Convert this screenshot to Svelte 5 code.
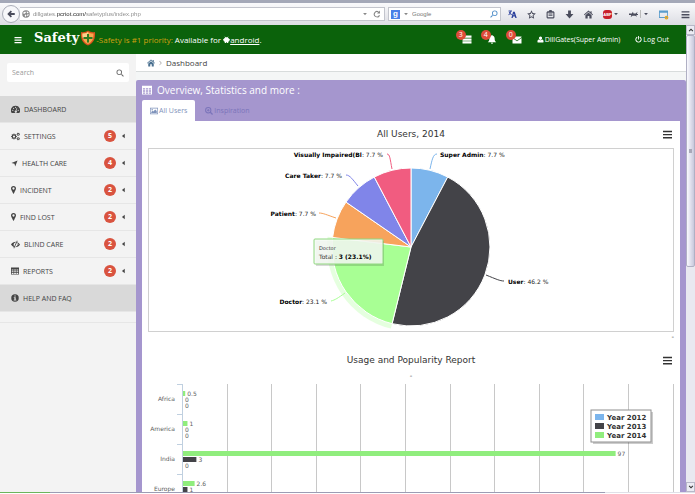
<!--
  SafetyPlus dashboard: browser chrome, top bar, side menu and the
  "All Users" statistics panel with its two charts.
-->
<script lang="ts">
  type Slice = {
    name: string;
    share: number;
    color: string;
    labelX: number;
    labelY: number;
    anchor: 'start' | 'end';
    connector: string;
  };

  const gear = (cx: number, cy: number, r: number, teeth: number, hole: number) => {
    const points: string[] = [];
    const steps = teeth * 4;
    for (let i = 0; i < steps; i++) {
      const radius = i % 4 < 2 ? r : r * 0.74;
      const angle = ((i - 0.5) / steps) * Math.PI * 2;
      points.push(`${(cx + radius * Math.cos(angle)).toFixed(2)} ${(cy + radius * Math.sin(angle)).toFixed(2)}`);
    }
    return `M${points.join('L')}z${dot(cx, cy, hole)}`;
  };

  const dot = (cx: number, cy: number, r: number) =>
    `M${cx - r} ${cy}a${r} ${r} 0 1 0 ${r * 2} 0a${r} ${r} 0 1 0 ${-r * 2} 0z`;

  // Glyphs sit in a 16x16 box and are filled with evenodd.
  const icons: Record<string, string> = {
    bars: 'M1 2h14v2.600H1zM1 7h14v2.600H1zM1 12h14v2.600H1z',
    chartBars: 'M0 1.500h16v2.500H0zM0 7h16v2.500H0zM0 12.500h16V15H0z',
    search: `${dot(6.5, 6.5, 5.5)}${dot(6.5, 6.5, 3.8)}M10.2 11.6l1.4-1.4 4 4-1.4 1.4z`,
    zoomIn: `${dot(6.5, 6.5, 6.3)}${dot(6.5, 6.5, 4.3)}M10.2 12l1.8-1.8 4 4-1.8 1.8zM5.7 4h1.6v1.7H9v1.6H7.3V9H5.7V7.3H4V5.7h1.7z`,
    gauge: `M8 1.5a8 8 0 0 0-6.8 12.7h13.6A8 8 0 0 0 8 1.5z${dot(3.2, 9.5, 1.1)}${dot(4.6, 5.8, 1.1)}${dot(8, 4.2, 1.1)}${dot(12.8, 9.5, 1.1)}M10.2 4.7l1.1.3-1.7 5.2a2 2 0 1 1-1.2-.3z`,
    cogs: `${gear(5.3, 8, 5.3, 8, 2)}${gear(12.9, 4, 3, 6, 1.1)}${gear(12.9, 12, 3, 6, 1.1)}`,
    arrow: 'M15 1L9.5 15 8 8.5 1 7z',
    pin: `M8 0a5 5 0 0 0-5 5c0 2.300 1.800 4 3.500 8.500L8 16l1.500-2.500C11.200 9 13 7.300 13 5a5 5 0 0 0-5-5z${dot(8, 5, 2.3)}`,
    eyeSlash: `M0 8.200C2 5 5 3.200 8.600 3.200L8 4.600A3.700 3.700 0 0 0 5.800 11l-.8 1.500C3 11.600 1.300 10.200 0 8.200zM11.500 3.900C13.400 4.800 14.900 6.300 16 8.200c-1.900 3-4.700 4.800-8.200 4.900l.8-1.400c2-.4 3.300-2.300 3-4.300 1 .2 2 .5 2.500.9-.9-1.300-2-2.300-3.300-3zM10.600 1l1.200.6L5.600 15l-1.200-.6z`,
    table: 'M0 1h16v14H0zM1.500 5v2.200h3.500V5zM6.300 5v2.200h3.500V5zM11 5v2.200h3.500V5zM1.500 8.400v2.200h3.500V8.400zM6.300 8.400v2.200h3.500V8.400zM11 8.400v2.200h3.500V8.400zM1.500 11.800v2h3.500v-2zM6.300 11.800v2h3.500v-2zM11 11.800v2h3.500v-2z',
    info: `${dot(8, 8, 7.5)}M6.700 2.800h2.800v2.400H6.700zM5.500 6.500h4v5h1.300v1.700H5.300v-1.700h1.400V8.200H5.500z`,
    home: 'M8 1L0 8l1 1.200L8 3.200l7 6L16 8l-2.500-2.200V2h-2v2zM8 4.500L2.500 9.200V15h4v-4.300h3V15h4V9.200z',
    image: `M0 1.500h16v13H0zM1.300 2.800v10.400h13.400V2.800z${dot(4.3, 5.700, 1.500)}M2.500 12v-2l2.500-2.500L6.500 9l4-4 3 3v4z`,
    tasks: 'M0 1h16v4H0zM0 6h16v4H0zM0 11h16v4H0z',
    bell: 'M8 0a1.200 1.200 0 0 0-1.200 1.300C4.500 1.800 3.300 3.800 3.300 6c0 3.500-.8 5-2.800 7h15c-2-2-2.800-3.500-2.800-7 0-2.200-1.200-4.200-3.500-4.700A1.200 1.200 0 0 0 8 0zM6 13.600h4a2 2 0 0 1-4 0z',
    envelope: 'M0 2.500h16v1.400L8 9.700 0 3.900zM0 5.500l8 5.800 8-5.800V15H0z',
    user: 'M8 1a3.600 3.600 0 0 0-3.600 3.800C4.400 7 6 9 8 9s3.600-2 3.600-4.200A3.600 3.600 0 0 0 8 1zM4 8.200C2 8.800 1 10.500 1 13c0 1.400.8 2 2 2h10c1.200 0 2-.6 2-2 0-2.500-1-4.200-3-4.800-2.200 2.300-5.800 2.300-8 0z',
    power: 'M7 0h2v8H7zM4.400 1.600l1.200 2.200a4.800 4.800 0 1 0 4.800 0l1.200-2.200A7.200 7.200 0 1 1 4.400 1.600z',
    back: 'M7.500 1L.5 8l7 7 2.500-2.500L7.500 10H15.500V6H7.500L10 3.500z',
    globe: `${dot(8, 8, 7.500)}M3 4.500L6.500 3 8 5 5.500 7.500 2.200 7zM9.500 2.500l3.700 2L12 7 9.500 5.500zM6 9l3 1-1.500 4L5.500 12zM11 8.500l3 .5-2.500 3.500-1.500-2z`,
    reload: 'M14 1v6H8l2.300-2.200A4.300 4.300 0 1 0 12 10l2 .8A6.400 6.400 0 1 1 11.800 3.300z',
    translate: 'M1 1h6v1.600H5.800L4.500 5.700 7 8 6 9.200 3.700 7.200 1.500 9.500.4 8.400 2.700 6 1.500 4l1.200-.8.9 1.300.7-1.900H1zM9 3h3l3.500 11H13l-.7-2.500H9.200L8.300 14H6zM10.300 6.500l-.7 3h2z',
    star: 'M8 .5l2.300 5 5.400.6-4 3.800 1 5.500L8 12.700l-4.700 2.700 1-5.500-4-3.800 5.400-.6zM8 4.200L6.700 7l-3 .4L6 9.500 5.400 12.400 8 11l2.600 1.400L10 9.500l2.300-2.100-3-.4z',
    clipboard: 'M5 2a3 2 0 0 1 6 0h2.500L15 4v9.500L13.500 15h-11L1 13.500V4l1.500-2zM3 5v8h10V5zM4.500 6.200h7v1.600h-7zM4.500 9.200h7v1.600h-7z',
    download: 'M5.500 1h5v6H15l-7 8-7-8h4.500z',
    windowIcon: 'M0 1h16v13H0zM1.500 5v7.500h13V5z',
    key: `${dot(8, 8, 6)}${dot(8, 8, 2)}`,
    caret: 'M3 5h10l-5 6z',
    caretLeft: 'M12 1v14L3 8z',
    chevron: 'M4 2l1.200-1.200L12 8l-6.800 7.200L4 14l5.500-6z',
    up: 'M8 4l6 6-2 2-4-4-4 4-2-2z',
    down: 'M8 12l6-6-2-2-4 4-4-4-2 2z',
    bug: 'M0 6h5l2-3 1 3h4l3-3-1 4h2v2h-3l1 3-3-2H6l-3 3 1-4H0z',
    android: 'M4 1l2 2h4l2-2 .5.500-1.700 2L14 6l2 2-2 4-2 1v3h-3v-2H7v2H4v-3L2 12 0 8l2-2 3-2.500-1.500-2z'
  };

  // Narrow glyphs are cropped to their own width.
  const boxes: Record<string, string> = {
    pin: '3 0 10 16'
  };

  const tools = ['translate', 'star', 'clipboard', 'download', 'home'];

  const notices = [
    { icon: 'tasks', label: 'Tasks', count: 3 },
    { icon: 'bell', label: 'Alerts', count: 4 },
    { icon: 'envelope', label: 'Messages', count: 0 }
  ];

  const menu = [
    { icon: 'gauge', label: 'DASHBOARD', count: null, active: true },
    { icon: 'cogs', label: 'SETTINGS', count: 5, active: false },
    { icon: 'arrow', label: 'HEALTH CARE', count: 4, active: false },
    { icon: 'pin', label: 'INCIDENT', count: 2, active: false },
    { icon: 'pin', label: 'FIND LOST', count: 2, active: false },
    { icon: 'eyeSlash', label: 'BLIND CARE', count: 2, active: false },
    { icon: 'table', label: 'REPORTS', count: 2, active: false },
    { icon: 'info', label: 'HELP AND FAQ', count: null, active: true }
  ];

  const slices: Slice[] = [
    { name: 'Super Admin', share: 1, color: '#7cb5ec', labelX: 291, labelY: 8, anchor: 'start', connector: 'M288 5C284 5 283 11 281 20' },
    { name: 'User', share: 6, color: '#434348', labelX: 359, labelY: 135, anchor: 'start', connector: 'M355 132C351 132 347 130 337 126' },
    { name: 'Doctor', share: 3, color: '#a8ff94', labelX: 178, labelY: 155, anchor: 'end', connector: 'M182 152C186 151 189 149 196 144' },
    { name: 'Patient', share: 1, color: '#f7a35c', labelX: 167, labelY: 67, anchor: 'end', connector: 'M170 64C174 64 178 66 187 69' },
    { name: 'Care Taker', share: 1, color: '#8085e9', labelX: 193, labelY: 29, anchor: 'end', connector: 'M197 26C201 26 204 31 209 37' },
    { name: 'Visually Impaired(Bl', share: 1, color: '#f15c80', labelX: 234, labelY: 8, anchor: 'end', connector: 'M238 5C241 5 241 10 243 20' }
  ];
  const total = slices.reduce((sum, s) => sum + s.share, 0);
  const center = { x: 262, y: 98 };

  const onCircle = (part: number, r: number) => {
    const angle = (part / total) * Math.PI * 2;
    return `${(center.x + r * Math.sin(angle)).toFixed(2)} ${(center.y - r * Math.cos(angle)).toFixed(2)}`;
  };

  function wedge(index: number, r: number) {
    const from = slices.slice(0, index).reduce((sum, s) => sum + s.share, 0);
    const to = from + slices[index].share;
    return `M${center.x} ${center.y}L${onCircle(from, r)}A${r} ${r} 0 0 1 ${onCircle(to, r)}z`;
  }

  const percent = (share: number) => ((share / total) * 100).toFixed(1);

  const regions = [
    { name: 'Africa', values: [0.5, 0, 0] },
    { name: 'America', values: [1, 0, 0] },
    { name: 'India', values: [97, 3, 0] },
    { name: 'Europe', values: [2.6, 1] }
  ];
  const barColors = ['#90ed7d', '#434348', '#7cb5ec'];
  const legend = [
    { label: 'Year 2012', color: '#7cb5ec' },
    { label: 'Year 2013', color: '#434348' },
    { label: 'Year 2014', color: '#90ed7d' }
  ];
  const axisX = 34;
  const gridX = Array.from({ length: 11 }, (_, i) => Math.round(axisX + (i + 1) * 44.6));
  const rowY = (row: number) => 5 + row * 30;
  const barWidth = (value: number) => value * 4.46;
</script>

{#snippet icon(name: string, cls: string = '')}
  <svg class="icon {cls}" viewBox={boxes[name] ?? '0 0 16 16'} aria-hidden="true"><path fill-rule="evenodd" d={icons[name]} /></svg>
{/snippet}

<div class="window">
  <header class="chrome">
    <button class="back" aria-label="Back">{@render icon('back')}</button>
    <div class="field address">
      {@render icon('globe', 'globe')}
      <input aria-label="Address" value="dillgates.pcriot.com/safetyplus/index.php" />
      {@render icon('caret', 'small')}
      <button aria-label="Reload">{@render icon('reload')}</button>
    </div>
    <div class="field web-search">
      <span class="engine">g</span>
      {@render icon('caret', 'small')}
      <input aria-label="Web search" placeholder="Google" />
      <button class="lens" aria-label="Go">{@render icon('search')}</button>
    </div>
    <nav class="tools" aria-label="Browser tools">
      {#each tools as tool}
        <button class:translate={tool === 'translate'} aria-label={tool}>{@render icon(tool)}</button>
      {/each}
      <button class="pair" aria-label="Ad blocker"><span class="abp">ABP</span>{@render icon('caret', 'small')}</button>
      <button class="pair" aria-label="Debugger">{@render icon('bug')}<span class="split"></span>{@render icon('caret', 'small')}</button>
      <button class="sheet" aria-label="Window tools">{@render icon('windowIcon')}{@render icon('key', 'key')}</button>
      <button class="menu" aria-label="Open menu">{@render icon('bars')}</button>
    </nav>
  </header>

  <div class="viewport">
    <div class="page">
      <header class="topbar">
        <button class="toggle" aria-label="Toggle menu">{@render icon('bars')}</button>
        <a class="brand" href="#home">Safety
          <svg class="shield" viewBox="0 0 30 32" aria-hidden="true">
            <path d="M15 1C11 4 6 5 1 4c-1 13 2 22 14 27C27 26 30 17 29 4 24 5 19 4 15 1z" fill="#d9531e" />
            <path d="M15 4c-3 2-7 3-11 3-.5 10 2 17 11 21 9-4 11.500-11 11-21-4 0-8-1-11-3z" fill="#f5a94d" />
            <path d="M15 4c-3 2-7 3-11 3-.2 4 0 6 .7 9H15z" fill="#fbd08a" />
            <path d="M13 8h4v6h7v4h-7v7h-4v-7H6v-4h7z" fill="#2e7d22" />
          </svg>
        </a>
        <p class="slogan">
          <span class="gold">-Safety is #1 priority:</span> Available for {@render icon('android')}<a href="#android">android</a>.
        </p>
        <nav class="account" aria-label="Account">
          {#each notices as notice}
            <button class="notice" aria-label={notice.label}>
              {@render icon(notice.icon)}
              <span class="notice-count">{notice.count}</span>
            </button>
          {/each}
          <a class="user" href="#profile">{@render icon('user')}DillGates(Super Admin)</a>
          <a class="logout" href="#logout">{@render icon('power')}Log Out</a>
        </nav>
      </header>

      <div class="columns">
        <aside class="sidebar">
          <form class="search">
            <input aria-label="Search" placeholder="Search" />
            <button type="button" aria-label="Search">{@render icon('search')}</button>
          </form>
          <ul class="side-menu">
            {#each menu as item}
              <li class:active={item.active}>
                <a href="#menu">
                  {@render icon(item.icon, item.icon)}
                  <span class="menu-label">{item.label}</span>
                  {#if item.count !== null}
                    <span class="menu-count">{item.count}</span>
                    {@render icon('caretLeft', 'tiny')}
                  {/if}
                </a>
              </li>
            {/each}
          </ul>
        </aside>

        <main class="content">
          <nav class="breadcrumb" aria-label="Breadcrumb">
            <a href="#home" aria-label="Home">{@render icon('home')}</a>
            {@render icon('chevron', 'chevron')}
            <span>Dashboard</span>
          </nav>

          <section class="panel">
            <h1>{@render icon('table')}Overview, Statistics and more :</h1>
            <div class="tabs" role="tablist">
              <button role="tab" aria-selected="true">{@render icon('image')}All Users</button>
              <button role="tab" aria-selected="false">{@render icon('zoomIn')}Inspiration</button>
            </div>

            <div class="panel-body">
              <div class="chart-head">
                <h2>All Users, 2014</h2>
                <button aria-label="Chart menu">{@render icon('chartBars')}</button>
              </div>
              <div class="pie-frame">
                <svg class="chart" viewBox="0 0 524 182" role="img" aria-label="All Users, 2014">
                  <path d={wedge(2, 84)} fill="#a8ff94" opacity="0.3" />
                  {#each slices as slice, i}
                    <path d={wedge(i, 79)} fill={slice.color} stroke="#fff" />
                    <path d={slice.connector} fill="none" stroke={slice.color} />
                    <text class="slice-label" x={slice.labelX} y={slice.labelY} text-anchor={slice.anchor}>
                      <tspan class="strong">{slice.name}</tspan>: {percent(slice.share)} %
                    </text>
                  {/each}
                  <rect x="167" y="92" width="68" height="25" fill="#000" opacity="0.15" />
                  <rect x="165" y="90" width="69" height="25" rx="1" fill="#f4f9f2" fill-opacity="0.88" stroke="#90d880" />
                  <text class="tip-name" x="170" y="101">Doctor</text>
                  <text class="tip-value" x="170" y="110">Total : <tspan class="strong">3 (23.1%)</tspan></text>
                </svg>
              </div>
              <p class="note">-</p>

              <div class="chart-head second">
                <h2>Usage and Popularity Report</h2>
                <button aria-label="Chart menu">{@render icon('chartBars')}</button>
              </div>
              <p class="subtitle">-</p>
              <svg class="chart" viewBox="0 0 526 126" role="img" aria-label="Usage and Popularity Report">
                {#each gridX as x}
                  <path d="M{x}.5 5V126" stroke="#c8c8c8" />
                {/each}
                <path d="M{axisX}.5 5V126" stroke="#c0d0e0" />
                {#each regions as region, row}
                  <path d="M{axisX - 5} {rowY(row)}.5h5" stroke="#c0d0e0" />
                  <text class="region" x="27" y={rowY(row) + 17} text-anchor="end">{region.name}</text>
                  {#each region.values as value, i}
                    <rect x={axisX + 1} y={rowY(row) + 7 + i * 6} width={barWidth(value)} height="5" fill={barColors[i]} />
                    <text class="bar-value" x={axisX + 3 + barWidth(value)} y={rowY(row) + 12 + i * 6}>{value}</text>
                  {/each}
                {/each}
                <rect x="445" y="33" width="60" height="32" fill="#000" opacity="0.2" />
                <rect x="443" y="31" width="60" height="32" fill="#fff" stroke="#909090" />
                {#each legend as entry, i}
                  <rect x="447" y={35 + i * 9} width="9" height="6" fill={entry.color} />
                  <text class="legend" x="459" y={41 + i * 9}>{entry.label}</text>
                {/each}
              </svg>
            </div>
          </section>
        </main>
      </div>
    </div>

    <div class="scrollbar">
      <button aria-label="Scroll up">{@render icon('up')}</button>
      <div class="track"><div class="thumb"><span class="grip"></span></div></div>
      <button aria-label="Scroll down">{@render icon('down')}</button>
    </div>
  </div>
  <div class="status"></div>
</div>

<style>
  :global(body) { margin: 0; background: #fff; }

  .window {
    display: flex;
    flex-direction: column;
    height: 100vh;
    overflow: hidden;
    font-family: 'Open Sans', sans-serif;
    font-size: 7px;
    color: #444;
  }

  button {
    display: inline-flex;
    align-items: center;
    justify-content: center;
    padding: 0;
    border: 0;
    background: none;
    color: inherit;
    font: inherit;
  }
  input {
    flex: 1;
    min-width: 0;
    padding: 0;
    border: 0;
    outline: 0;
    background: none;
    font: inherit;
  }
  a { color: inherit; text-decoration: none; }
  h1, h2, p, ul { margin: 0; padding: 0; font-weight: 400; }

  .icon {
    flex: none;
    width: 8px;
    height: 8px;
    fill: currentColor;
  }
  .icon.small { width: 6px; height: 6px; }
  .icon.tiny { width: 5px; height: 6px; }

  /* browser chrome */
  .chrome {
    display: flex;
    flex: none;
    align-items: center;
    box-sizing: border-box;
    height: 25px;
    padding: 0 5px 0 2px;
    border-top: 3px solid #a4a8b8;
    background: linear-gradient(#fafafc, #dcdde3);
    font-family: 'Liberation Sans', sans-serif;
    font-size: 6px;
    color: #4a4c5c;
  }
  .back {
    flex: none;
    width: 18px;
    height: 18px;
    border: 1px solid #aaadb8;
    border-radius: 50%;
    background: #f7f7fa;
  }
  .field {
    display: flex;
    align-items: center;
    gap: 3px;
    box-sizing: border-box;
    height: 14px;
    border: 1px solid #c3c5cd;
    background: #fff;
    color: #888;
  }
  .address { flex: 1; padding: 0 3px 0 2px; border-left: 0; }
  .address input {
    color: transparent;
    background: linear-gradient(90deg, #888 24px, #222 24px 53px, #888 53px);
    background-clip: text;
    -webkit-background-clip: text;
  }
  .address button { margin-left: 2px; }
  .web-search {
    width: 113px;
    margin-left: 3px;
    padding: 0 2px;
  }
  .web-search input::placeholder { color: #777; opacity: 1; }
  .engine {
    width: 9px;
    height: 9px;
    background: #4a80e8;
    color: #fff;
    font-weight: 700;
    font-size: 8px;
    line-height: 8px;
    text-align: center;
  }
  .lens { color: #4c8cc8; transform: scaleX(-1); }
  .tools {
    display: flex;
    align-items: center;
    gap: 10px;
    margin-left: 7px;
  }
  .tools .icon { width: 9px; height: 9px; }
  .tools .small { width: 6px; height: 6px; }
  .translate { color: #2a3f9c; }
  .pair { gap: 1px; }
  .abp {
    width: 9px;
    height: 9px;
    border-radius: 3px;
    background: #c8202c;
    color: #fff;
    font-size: 4px;
    font-weight: 700;
    line-height: 9px;
  }
  .split { width: 1px; height: 8px; margin: 0 1px; background: #bbb; }
  .sheet { position: relative; color: #5a9ccc; }
  .sheet .key {
    position: absolute;
    right: -1px;
    bottom: -1px;
    width: 5px;
    height: 5px;
    color: #e8a820;
  }
  .menu { margin-left: 3px; }

  .viewport { display: flex; flex: 1; min-height: 0; }
  .page { display: flex; flex: 1; flex-direction: column; min-width: 0; overflow: hidden; }

  /* green top bar */
  .topbar {
    display: flex;
    flex: none;
    align-items: center;
    height: 29px;
    padding: 0 17px 0 14px;
    background: #0b620b;
    color: #fff;
  }
  .brand {
    display: flex;
    align-items: center;
    gap: 1px;
    align-self: flex-start;
    margin-left: 12px;
    font-family: 'DejaVu Serif', serif;
    font-size: 13px;
    font-weight: 700;
    line-height: 25px;
  }
  .shield { width: 16px; height: 16px; }
  .slogan {
    display: flex;
    align-items: center;
    font-size: 8px;
    white-space: pre;
  }
  .slogan a { text-decoration: underline; }
  .slogan .icon { width: 7px; height: 7px; }
  .gold { color: #d0a010; }
  .account { display: flex; align-items: center; margin-left: auto; }
  .notice { position: relative; margin-right: 15px; }
  .notice .icon { width: 10px; height: 9px; }
  .notice-count {
    position: absolute;
    top: -5px;
    left: -6px;
    width: 10px;
    height: 10px;
    border-radius: 50%;
    background: #dd4b39;
    line-height: 10px;
    text-align: center;
  }
  .user, .logout { display: flex; align-items: center; gap: 1px; }
  .user .icon, .logout .icon { width: 7px; height: 7px; }
  .logout { margin-left: 15px; }

  .columns { display: flex; flex: 1; min-height: 0; }

  /* side menu */
  .sidebar {
    flex: none;
    width: 136px;
    background: #f3f3f3;
  }
  .search {
    display: flex;
    align-items: center;
    height: 19px;
    margin: 9px 7px 14px;
    padding: 0 5px;
    border-radius: 2px;
    background: #fff;
    color: #666;
  }
  .search input::placeholder { color: #999; opacity: 1; }
  .side-menu {
    padding-bottom: 10px;
    border-bottom: 1px solid #e6e6e6;
    list-style: none;
  }
  .side-menu li {
    box-sizing: border-box;
    height: 27px;
    border-bottom: 1px solid #e6e6e6;
  }
  .side-menu li.active { background: #d9d9d9; }
  .side-menu a {
    display: flex;
    align-items: center;
    height: 100%;
    padding: 0 10px 0 11px;
  }
  .side-menu .gauge, .side-menu .cogs, .side-menu .eyeSlash { width: 9px; height: 9px; }
  .side-menu .arrow { width: 7px; height: 7px; }
  .side-menu .pin { width: 5px; }
  .menu-label { flex: 1; margin-left: 4px; }
  .menu-count {
    width: 12px;
    height: 12px;
    margin-right: 5px;
    border-radius: 50%;
    background: #d9533f;
    color: #fff;
    font-weight: 700;
    line-height: 12px;
    text-align: center;
  }

  /* content */
  .content {
    display: flex;
    flex: 1;
    flex-direction: column;
    min-width: 0;
    background: #f4f6f6;
  }
  .breadcrumb {
    display: flex;
    flex: none;
    align-items: center;
    gap: 3px;
    height: 17px;
    margin-bottom: 8px;
    padding-left: 11px;
    border-bottom: 1px solid #d8dcdc;
    background: #fff;
    font-size: 8px;
    line-height: 10px;
  }
  .breadcrumb a { display: flex; color: #4a7090; }
  .breadcrumb .chevron { width: 5px; height: 6px; color: #999; }

  .panel {
    flex: 1;
    padding: 0 6px;
    border-radius: 2px 2px 0 0;
    background: #a596ce;
  }
  .panel h1 {
    display: flex;
    align-items: center;
    gap: 5px;
    height: 20px;
    color: #fff;
    font-size: 10px;
  }
  .panel h1 .icon { width: 10px; height: 10px; }
  .tabs { display: flex; height: 21px; }
  .tabs button {
    gap: 1px;
    padding: 0 8px;
    color: #7b74ba;
  }
  .tabs [aria-selected='true'] {
    border-radius: 2px 2px 0 0;
    background: #fff;
    color: #7f93bb;
  }
  .tabs button + button { margin-left: 2px; }

  .panel-body {
    min-height: 100%;
    padding: 0 6px;
    background: #fff;
    font-family: 'DejaVu Sans', sans-serif;
  }
  .chart-head {
    display: grid;
    grid-template-columns: 1fr auto 1fr;
    align-items: center;
    height: 26px;
    padding-bottom: 1px;
    color: #333;
  }
  .chart-head h2 {
    grid-column: 2;
    font-size: 9px;
    line-height: 12px;
  }
  .chart-head button { justify-self: end; margin-right: 2px; }
  .chart-head .icon { width: 9px; height: 9px; }
  .pie-frame { border: 1px solid #d0d0d0; }
  .chart { display: block; width: 100%; }
  .note { height: 15px; text-align: right; line-height: 10px; }
  .subtitle { height: 5px; text-align: center; line-height: 5px; }

  .slice-label { font: 6px 'DejaVu Sans', sans-serif; fill: #222; }
  .strong { font-weight: 700; fill: #000; }
  .tip-name { font: 5px 'DejaVu Sans', sans-serif; fill: #333; }
  .tip-value { font: 6px 'DejaVu Sans', sans-serif; fill: #333; }
  .region, .bar-value { font: 6px 'DejaVu Sans', sans-serif; fill: #606060; }
  .legend { font: 700 7px 'DejaVu Sans', sans-serif; fill: #333; }

  /* scrollbar and status strip */
  .scrollbar {
    display: flex;
    flex: none;
    flex-direction: column;
    width: 9px;
    background: #e9e9f0;
    color: #333;
  }
  .scrollbar button { height: 10px; border: 1px solid #b8b8c8; background: #ececf4; }
  .scrollbar .icon { width: 6px; height: 6px; }
  .track { flex: 1; }
  .thumb {
    display: grid;
    place-items: center;
    box-sizing: border-box;
    height: 52%;
    border: 1px solid #b0b0c4;
    border-radius: 2px;
    background: linear-gradient(90deg, #fafaff, #c8c8dc);
  }
  .grip { width: 3px; height: 4px; background: #a8a8b8; }
  .status {
    flex: none;
    height: 1px;
    border-bottom: 1px solid #fff;
    background: linear-gradient(90deg, #6cb45c 50px, #9c9cb4 50px 605px, #e0e0e8 605px);
  }
</style>
